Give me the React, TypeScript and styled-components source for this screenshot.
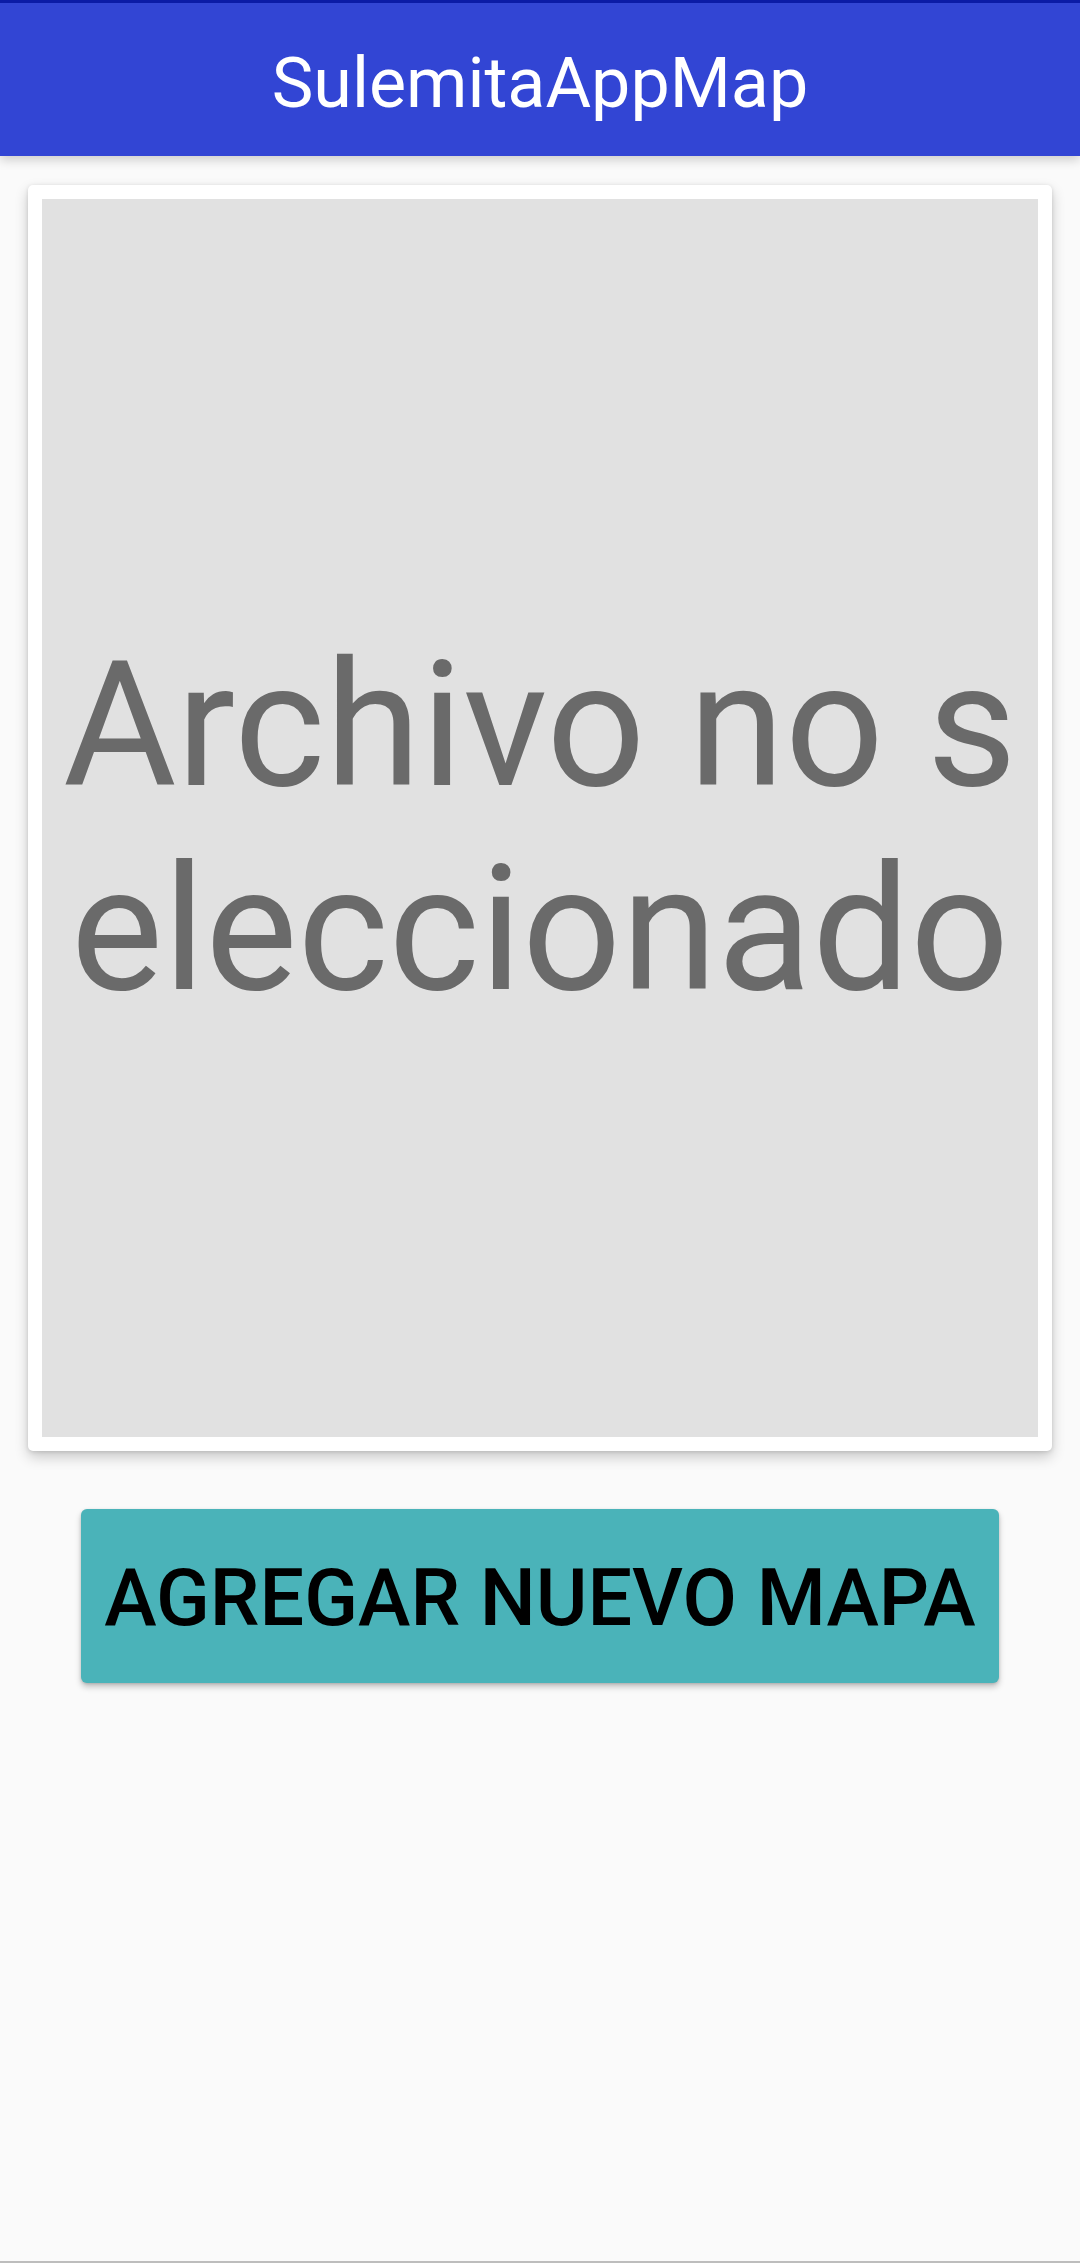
import React from "react";
import styled, { createGlobalStyle } from "styled-components";

const GlobalStyle = createGlobalStyle`
  html, body {
    margin: 0;
    padding: 0;
    background: #fafafa;
    font-family: Roboto, "Noto Sans", "Liberation Sans", sans-serif;
  }
  * { box-sizing: border-box; }
`;

const Screen = styled.div`
  width: 1080px;
  height: 2263px;
  background: #fafafa;
  display: flex;
  flex-direction: column;
  border-top: 3px solid #0b1ba6;
  border-bottom: 2px solid #bdbdbd;
  overflow: hidden;
`;

const AppBar = styled.header`
  height: 153px;
  flex: none;
  background: #3245d4;
  display: flex;
  align-items: center;
  justify-content: center;
  box-shadow: 0 4px 10px rgba(0, 0, 0, 0.18);
  position: relative;
  z-index: 1;
`;

const Title = styled.h1`
  margin: 0;
  color: #ffffff;
  font-family: Roboto, sans-serif;
  font-weight: 400;
  font-size: 70px;
  line-height: 1;
  padding-top: 6px;
`;

const Content = styled.main`
  display: flex;
  flex-direction: column;
  align-items: center;
  padding: 29px 28px 0;
`;

const MapCard = styled.section`
  width: 1024px;
  height: 1266px;
  background: #ffffff;
  padding: 14px;
  border-radius: 5px;
  box-shadow: 0 6px 14px rgba(0, 0, 0, 0.2), 0 1px 4px rgba(0, 0, 0, 0.12);
`;

const Placeholder = styled.div`
  width: 100%;
  height: 100%;
  background: #e1e1e1;
  display: flex;
  align-items: center;
  justify-content: center;
  padding-top: 20px;
`;

const PlaceholderText = styled.p`
  margin: 0;
  text-align: center;
  color: #6a6a6a;
  font-family: Roboto, sans-serif;
  font-weight: 400;
  font-size: 174px;
  line-height: 204px;
`;

const AddButton = styled.button`
  margin-top: 58px;
  width: 918px;
  height: 174px;
  border: none;
  border-radius: 6px;
  background: #4ab3b9;
  color: #000000;
  font-family: Roboto, sans-serif;
  font-weight: 500;
  font-size: 79px;
  letter-spacing: 0;
  text-transform: uppercase;
  box-shadow: 0 4px 6px rgba(0, 0, 0, 0.22), 0 1px 3px rgba(0, 0, 0, 0.14);
  display: flex;
  align-items: center;
  justify-content: center;
  padding: 4px 0 0;
  cursor: pointer;
`;

export default function App() {
  return (
    <>
      <GlobalStyle />
      <Screen>
        <AppBar>
          <Title>SulemitaAppMap</Title>
        </AppBar>
        <Content>
          <MapCard>
            <Placeholder>
              <PlaceholderText>
                Archivo no s
                <br />
                eleccionado
              </PlaceholderText>
            </Placeholder>
          </MapCard>
          <AddButton>Agregar nuevo mapa</AddButton>
        </Content>
      </Screen>
    </>
  );
}
